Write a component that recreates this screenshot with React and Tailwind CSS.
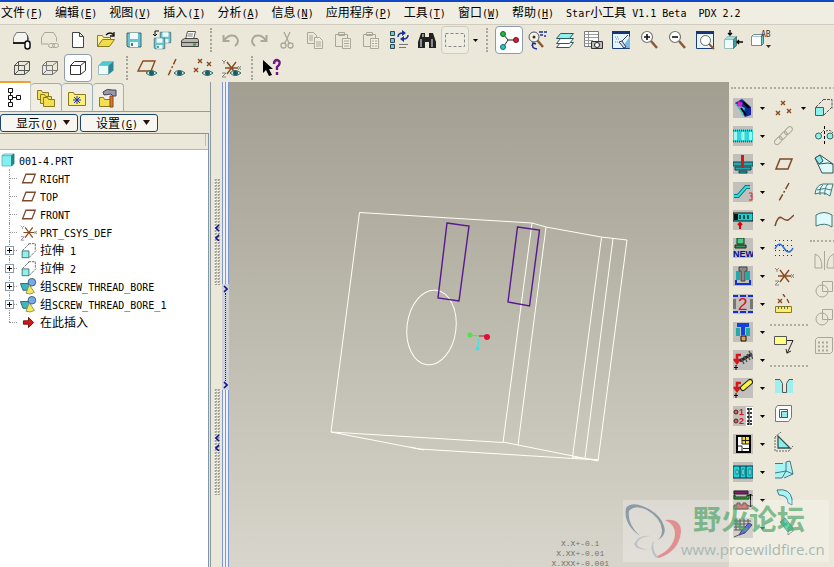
import React from 'react';

const MONO = "font-['DejaVu_Sans_Mono','Noto_Sans_CJK_SC',monospace]";

// Full-width runs are set at 12px and half-width runs at 10px, so two Latin cells equal one Chinese cell.
function T({ children, k }) {
  const runs = String(children).match(/[\u3000-\u9fff]+|[^\u3000-\u9fff]+/g) || [];
  return (
    <span className="whitespace-pre">
      {runs.map((r, i) => (
        <span key={i} className={/[\u3000-\u9fff]/.test(r) ? "font-['Noto_Sans_CJK_SC',sans-serif] text-[12px]" : 'text-[10px]'}>{r}</span>
      ))}
      {k && <span className="text-[10px]">(<u>{k}</u>)</span>}
    </span>
  );
}

const Svg = ({ children, s = 20 }) => (
  <svg width={s} height={s} viewBox="0 0 20 20" fill="none" strokeWidth="1" aria-hidden="true">{children}</svg>
);

function Tool({ label, children, boxed }) {
  return (
    <button
      type="button"
      aria-label={label}
      className={`flex h-7 w-7 shrink-0 items-center justify-center ${boxed === 'on' ? 'rounded border border-[#8a9bb0] bg-white' : boxed === 'off' ? 'rounded border border-[#d0cdc0] bg-[#efede2]' : ''}`}
    >
      <Svg>{children}</Svg>
    </button>
  );
}

const Sep = () => (
  <span className="flex h-7 w-[13px] shrink-0 items-center justify-center">
    <span className="h-6 border-l-2 border-dotted border-[#a8a598]" />
  </span>
);
const Drop = ({ label, className = '' }) => (
  <button type="button" aria-label={label} className={`flex h-7 w-[10px] shrink-0 items-center justify-center ${className}`}>
    <svg width="5" height="3" viewBox="0 0 5 3" aria-hidden="true"><path d="M0 0h5L2.500 3z" fill="#000" /></svg>
  </button>
);

const Wire = ({ c = '#555', hidden }) => (
  <g stroke={c}><path d="M2.500 7.500h10v9h-10zM2.500 7.500l4-4h11l-5 4M17.500 3.500v9l-5 4" />{hidden && <path d="M6.500 3.500v9h11M6.500 12.500l-4 4" />}</g>
);
const Eye = () => (
  <g><path d="M9 15q5-5 11 0q-6 5-11 0z" fill="#cfe5e2" stroke="#365" /><circle cx="14.500" cy="15" r="2.500" fill="#176070" /></g>
);
const X = ({ x, y, c = '#8a4a20', r = 2 }) => <path d={`M${x - r} ${y - r}l${2 * r} ${2 * r}M${x + r} ${y - r}l${-2 * r} ${2 * r}`} stroke={c} strokeWidth="1.400" />;
const Plane = () => <path d="M6 5h12l-4 10H2z" stroke="#7c4a2c" strokeWidth="1.500" />;
const Csys = () => (
  <g><path d="M4 10h13M6 4l9 12M15 4L6 16" stroke="#8a4a20" strokeWidth="1.400" /><path d="M1 2l2 2 2-2M3 4v2M17 8l3 4M20 8l-3 4M1 15h4l-4 4h4" stroke="#888" /></g>
);
const Disk = ({ x = 0, y = 0, s = 1 }) => (
  <g transform={`translate(${x} ${y}) scale(${s})`}><path d="M3 3h14v14H4l-1-1z" fill="#63c5cf" stroke="#426a74" /><path d="M6 3h8v6H6z" fill="#eefafa" /><path d="M6 12h8v5H6z" fill="#f5f5f5" /><path d="M7 13h2v3H7z" fill="#387" /></g>
);
const Folder = ({ x = 0, y = 0 }) => <path transform={`translate(${x} ${y})`} d="M1.500 3.500h4l1 2h6v7h-11z" fill="#f4df52" stroke="#8a7a20" />;
const Lens = ({ x = 8, y = 7 }) => (
  <g><path d={`M${x + 4} ${y + 4}l6 7`} stroke="#8a5a38" strokeWidth="2.500" /><circle cx={x} cy={y} r="5.500" fill="#fff" stroke="#777" strokeWidth="1.200" /></g>
);
const Clip = ({ list }) => (
  <g stroke="#aaa797"><path d="M2.500 4.500h12v12h-12zM5.500 2.500h6v3h-6z" /><path d="M9.500 8.500h8v10h-8z" fill="#efede2" /><path d={list ? 'M11 11h2M14 11h2M11 13.500h2M14 13.500h2M11 16h2M14 16h2' : 'M11 11h5M11 13.500h5M11 16h5'} /></g>
);

const ROW1A = [
  ['连接', <g><path d="M1.500 13.500v-6l3-5h9l3 5v3" fill="#f5f5f0" stroke="#777" /><path d="M1 13h12" stroke="#222" strokeWidth="2" /><path d="M15.500 5v6" stroke="#b22" /><rect x="13" y="11" width="5" height="8" rx="2.500" fill="#fff" stroke="#111" strokeWidth="1.500" /></g>],
  ['断开', <g stroke="#aaa797"><path d="M1.500 13.500v-6l3-5h9l3 5v4M1 14h7" /><rect x="8.500" y="13.500" width="6" height="4" rx="2" /><rect x="12.500" y="13.500" width="6" height="4" rx="2" /></g>],
  ['新建', <path d="M4.500 2.500h7l4 4v11h-11zM11.500 2.500v4h4" fill="#fff" stroke="#444" />],
  ['打开', <g><path d="M1.500 16.500v-11h5l1 2h7v3" fill="#fff3a0" stroke="#8a7a20" /><path d="M1.500 16.500l5-7h12l-5 7z" fill="#f2dc4a" stroke="#8a7a20" /><path d="M10 5q4-4 8 0M18 2v4h-4" stroke="#111" strokeWidth="1.300" /></g>],
  ['保存', <Disk />],
  ['保存副本', <g><Disk x={6} y={0} s={0.75} /><Disk x={0} y={6} s={0.75} /><path d="M7 1H3v5M1 4l2 2 2-2" stroke="#111" /></g>],
  ['打印', <g><path d="M5.500 9.500l2-8h8l-2 8" fill="#fff" stroke="#555" /><path d="M8 4h5M7.500 6h5" stroke="#777" /><path d="M1.500 10.500l3-2h13l1 2v6h-17z" fill="#b9b7aa" stroke="#444" /><path d="M2 12.500h16" stroke="#444" /><path d="M13 14.500h3" stroke="#2a2" strokeWidth="2" /></g>],
];
const ROW1B = [
  ['撤消', <path d="M2.500 5v6h6M3 11q4-7 11-5q6 5 0 10" stroke="#aaa797" strokeWidth="2" />],
  ['重做', <path d="M17.500 5v6h-6M17 11q-4-7-11-5q-6 5 0 10" stroke="#aaa797" strokeWidth="2" />],
  ['剪切', <g stroke="#aaa797" strokeWidth="1.300"><path d="M7 2l5 11M13 2L8 13" /><circle cx="6.500" cy="15.500" r="2.500" /><circle cx="13.500" cy="15.500" r="2.500" /></g>],
  ['复制', <g stroke="#aaa797"><path d="M2.500 2.500h6l3 3v8h-9z" /><path d="M9.500 7.500h5l3 3v8h-8z" fill="#efede2" /><path d="M4 6h4M4 8h4M4 10h4M11 12h5M11 14h5M11 16h5" /></g>],
  ['粘贴', <Clip />],
  ['选择性粘贴', <Clip list />],
  ['再生', <g><path d="M1.500 1.500h4v4h-4zM1.500 8.500h4v4h-4zM1.500 14.500h4v4h-4z" fill="#62d0d0" stroke="#345" /><path d="M9 7q0-4 5-4M19 5q0 4-5 4" stroke="#1a2f9a" strokeWidth="1.500" /><path d="M13 0l4 3-4 3zM15 6l-4 3 4 3z" fill="#1a2f9a" /><path d="M10 14.500h9M10 17.500h7" stroke="#777" /></g>],
  ['查找', <g fill="#222"><path d="M4 3h4v4h4V3h4l3 9v6h-7v-6H8v6H1v-6z" /><path d="M4 9v8M15 9v8M6 4v3" stroke="#bbb" strokeWidth="1.400" /></g>],
];
const ROW1C = [
  ['定向模式', <g><path d="M10 10l6 7" stroke="#8a5a38" strokeWidth="2.500" /><circle cx="7" cy="7" r="5" fill="#f4f2ea" stroke="#555" /><circle cx="7" cy="7" r="1.500" fill="#333" /><path d="M12 2h4M17 2h3M13 5h3M17 6h2M6 14q-2 4 4 5M5 16l1-3 3 1" stroke="#1a2f9a" strokeWidth="1.500" /></g>],
  ['层', <g stroke="#2c5a5a"><path d="M1.500 17.500l4-5h13l-4 5z" fill="#fff" /><path d="M1.500 13.500l4-5h13l-4 5z" fill="#fff" /><path d="M1.500 8.500l4-5h13l-4 5z" fill="#8ff0ec" /></g>],
  ['视图管理器', <g><path d="M1.500 1.500h14v15h-14z" fill="#fff" stroke="#777" /><path d="M1 4.500h14M1 7.500h14M1 10.500h9M1 13.500h7M5.500 2v14" stroke="#999" /><path d="M8.500 11.500h11v7h-11z" fill="#bbb" stroke="#333" /><circle cx="14" cy="15" r="2.500" fill="#fff" stroke="#222" /></g>],
  ['重画', <g><path d="M1.500 1.500h17v17h-17z" fill="#e8f4fc" stroke="#1c3f78" /><path d="M1 1h18v3H1z" fill="#17357a" /><path d="M11 18L19 6v12z" fill="#7ab8ea" /><path d="M8 12l5 6 2-1-4-6zM11 11l6-6" fill="#dde" stroke="#345" /><path d="M4 7h4M5 9h4M4 12h3" stroke="#49c" strokeDasharray="1 1" /></g>],
  ['放大', <g><Lens /><path d="M5 7h6M8 4v6" stroke="#111" strokeWidth="1.600" /></g>],
  ['缩小', <g><Lens /><path d="M5 7h6" stroke="#111" strokeWidth="1.600" /></g>],
  ['重新调整', <g><path d="M1.500 1.500h17v17h-17z" fill="#e8f4fc" stroke="#1c3f78" /><path d="M1 1h18v3H1z" fill="#17357a" /><path d="M13 13l6 6" stroke="#8a5a38" strokeWidth="2" /><circle cx="10.500" cy="10.500" r="5" fill="#fff" stroke="#666" /></g>],
  ['重定向', <g><path d="M1.500 9.500h9v9h-9z" fill="#effafa" stroke="#9bb" /><path d="M1.500 9.500l3-3h9l-3 3z" fill="#9ee0e0" stroke="#9bb" /><path d="M13.500 6.500v9l-3 3v-9z" fill="#38a0a4" stroke="#577" /><path d="M7 0v5M5 3l2 2 2-2M20 12h-6M16 10l-2 2 2 2" stroke="#000" strokeWidth="1.300" /></g>],
  ['已命名视图', <g><path d="M.500 6.500h10v9h-10z" fill="#fff" stroke="#789" /><path d="M.500 6.500l2-2h10l-2 2" fill="#dff" stroke="#789" /><path d="M12.500 4.500v9l-2 2v-9z" stroke="#577" fill="#6cc" /><path d="M15 15h5l-2.500 3z" fill="#422" /><text x="10" y="7" fontSize="8" fill="#333" className="font-['DejaVu_Sans_Mono',monospace]">AB</text></g>],
];
const ROW2A = [
  ['线框', <Wire hidden />],
  ['隐藏线', <Wire c="#777" hidden />],
  ['无隐藏线', <Wire c="#333" />, 'on'],
  ['着色', <g><path d="M2.500 7.500h10v9h-10z" fill="#effcfc" stroke="#9bb" /><path d="M2.500 7.500l4-4h11l-5 4z" fill="#4cc8d0" stroke="#9bb" /><path d="M17.500 3.500v9l-5 4v-9z" fill="#2a8894" /></g>],
];
const ROW2B = [
  ['基准平面显示', <g><path d="M6 3h12l-4 10H1z" stroke="#8a4a20" strokeWidth="1.400" /><Eye /></g>],
  ['基准轴显示', <g><path d="M11 1L3 18" stroke="#8a4a20" strokeWidth="1.500" strokeDasharray="6 2 2 2" /><Eye /></g>],
  ['基准点显示', <g><X x={7} y={3} /><X x={16} y={6} /><X x={3} y={12} /><Eye /></g>],
  ['坐标系显示', <g><Csys /><Eye /></g>],
];

const COL_A = [
  <g><path d="M2 5l7-4 9 8v8l-6 2z" fill="#1425a0" /><path d="M2 5l8 13 2-8z" fill="#40c8c8" /><path d="M5 3l5 2-2 4-4-1z" fill="#e020d0" /><path d="M10 4l6 6M8 10l5 7" stroke="#000" strokeWidth="2" /></g>,
  <g><path d="M0 4h20v12H0z" fill="#33d5d5" /><path d="M2.500 6v8M10 6v8M17.500 6v8" stroke="#9ff5f5" strokeWidth="3" /><path d="M0 4.500h20M0 15.500h20" stroke="#087878" strokeWidth="2" strokeDasharray="1 1" /></g>,
  <g><path d="M0 8h20v4H0zM2 13h16v3H2zM6 17h8v2H6z" fill="#2aa" stroke="#145" /><path d="M8 1h3v13H8z" fill="#d81818" /></g>,
  <g><path d="M1 14h4l8-9h4" stroke="#087878" strokeWidth="4" /><path d="M1 14h4l8-9h4" stroke="#35dede" strokeWidth="2" /><path d="M16 11h3v7h-3M17 14h2" stroke="#d22" /></g>,
  <g><path d="M0 3h20v8H0z" fill="#2cc" stroke="#111" /><path d="M1 4h4v6H1z" fill="#111" /><path d="M7 5v4M11 5v4M15 5v4" stroke="#055" strokeWidth="2" /><path d="M7 19v-5M5 15l2-2 2 2" stroke="#d00" strokeWidth="2" /></g>,
  <g><path d="M4 0h7v6H4z" fill="#4c8" stroke="#131" /><path d="M2 7h11v3H2z" fill="#486" stroke="#131" /><text x="0" y="19" fontSize="9" fontWeight="700" fill="#001090" className="font-['Liberation_Sans',sans-serif]">NEW</text></g>,
  <g><path d="M3 5h4v9H3zM13 5h4v9h-4z" fill="#2aa" /><path d="M6 1h8v4h-2v10H8V5H6z" fill="#888" stroke="#444" /><path d="M3 14v4h14v-4" stroke="#1530d0" strokeWidth="2" /></g>,
  <g><path d="M0 5h3v10H0zM17 5h3v10h-3z" fill="#777" /><path d="M0 2h20M0 18h20" stroke="#1530d0" strokeWidth="2" strokeDasharray="5 2 6 2" /><text x="5" y="16" fontSize="17" fill="#d81020" className="font-['Liberation_Sans',sans-serif]">2</text></g>,
  <g><path d="M3 6h4v8H3zM13 6h4v8h-4z" fill="#2aa" /><path d="M4 1h12v4h-4v8H8V5H4z" fill="#1540e0" /><path d="M8 14h5v5H8z" fill="#e8a050" stroke="#111" /></g>,
  <g><path d="M8 5H4v8M1 9l3 4 3-4" stroke="#d81818" strokeWidth="2.500" /><path d="M7 11L19 4" stroke="#222" strokeWidth="3" /><path d="M8 8l3 6M11 6l3 6M14 4l3 6M16 1l4 8" stroke="#555" strokeWidth="1.500" /><path d="M1 17.500h4M3 15v5" stroke="#000" /></g>,
  <g><path d="M8 5H4v8M1 9l3 4 3-4" stroke="#d81818" strokeWidth="2.500" /><path d="M10 10l7-6" stroke="#222" strokeWidth="6" strokeLinecap="round" /><path d="M10 10l7-6" stroke="#fff23a" strokeWidth="4" strokeLinecap="round" /><path d="M1 17.500h4M3 15v5" stroke="#000" /></g>,
  <g><circle cx="3" cy="6" r="2" stroke="#522" fill="#c66" /><circle cx="3" cy="15" r="2" stroke="#522" fill="#c66" /><text x="6" y="9" fontSize="9" fontWeight="700" fill="#d81020" className="font-['Liberation_Sans',sans-serif]">1</text><text x="6" y="18" fontSize="9" fontWeight="700" fill="#d81020" className="font-['Liberation_Sans',sans-serif]">2</text><path d="M13 1h7v19h-7z" fill="#fff" /><path d="M14 3h5M14 7h5M14 11h5M14 15h5M14 18h5" stroke="#000" strokeWidth="1.500" strokeDasharray="2 1" /><path d="M16 2v17" stroke="#000" /></g>,
  <g><path d="M4 2h13v16H4z" fill="#fff" stroke="#000" strokeWidth="2" /><path d="M9 3h7v7H9z" fill="#f8e020" /><path d="M9 3v7h7M12.500 3v7M9 6.500h7M10 14.500h6M5 12h4v5" stroke="#222" /></g>,
  <g><path d="M0 4h20v12H0z" fill="#24cfd2" stroke="#035" /><path d="M7 4v12M13 4v12" stroke="#035" /><path d="M3 8h2v4H3zM9 7h2v6H9zM16 7h2v6h-2z" fill="#dff" stroke="#088" /></g>,
  <g><path d="M1 1h14v3H1z" fill="#8a1c70" stroke="#222" /><path d="M2 7h12v-2h2v4H1V5h1z" fill="#3c3" stroke="#131" /><path d="M1 19v-4h3v-2h3v2h3v-2h3v2h2v4z" fill="#b85a48" stroke="#422" /><path d="M17.500 4v13M15.500 6l2-2 2 2M15.500 15l2 2 2-2" stroke="#000" /></g>,
  <g><path d="M1 3h17M1 6h17M1 9h14M1 12h9M3 1v11M7 1v11M11 1v11M15 1v8" stroke="#222" /><path d="M1 19l7-3" stroke="#222" /><path d="M6 17l3-5 7-7 3 2-7 8z" fill="#2a38d0" stroke="#114" /></g>,
];
const A_LABELS = ['装配', '板件', '螺钉', '弯管', '冲孔', '新件', '导柱', '双件', '定位', '螺纹', '销钉', '排序', '清单', '工位', '模座', '明细'];

const COL_B = [
  ['基准点', <g><X x={9} y={5} /><X x={4} y={15} /><X x={15} y={13} /></g>],
  ['链', <g stroke="#aaa797"><rect x="-4" y="-2.500" width="9" height="5" rx="2.500" transform="translate(4 15) rotate(-45)" /><rect x="-4" y="-2.500" width="9" height="5" rx="2.500" transform="translate(9 10) rotate(-45)" /><rect x="-4" y="-2.500" width="9" height="5" rx="2.500" transform="translate(14 5) rotate(-45)" /></g>],
  ['基准平面', <Plane />],
  ['基准轴', <path d="M15 1L5 19" stroke="#7c4a2c" strokeWidth="1.500" strokeDasharray="7 2 2 2" />],
  ['基准曲线', <path d="M1 16Q4 5 8 8T14 10T20 5" stroke="#7c4a2c" strokeWidth="1.500" />],
  ['草绘', <g><path d="M1 2.500h19M1 7.500h19M1 12.500h19M1 17.500h19" stroke="#333" strokeDasharray="1 3" /><path d="M1 11q4-9 9-1t9 0" stroke="#2a6fd8" strokeWidth="1.500" /></g>],
  ['坐标系', <Csys />],
  ['分析', <g><X x={6} y={7} /><path d="M9 0l2 3M13 5l2 4" stroke="#8a4a20" strokeWidth="1.400" /><path d="M1.500 12.500h16v6h-16z" fill="#f5ee70" stroke="#8a7a20" /><path d="M4.500 12v3M7.500 12v3M10.500 12v3M13.500 12v3" stroke="#665" /></g>],
  null,
  ['注释', <g><path d="M.500 1.500h12v8h-12z" fill="#ffff80" stroke="#555" /><path d="M13 5.500h6l-6 13M12 14l1 4 4-2" stroke="#222" /></g>],
  null,
  ['孔', <g><path d="M1 4h5l3 3v9h3V7l3-3h4v13H1z" fill="#a0efef" /><path d="M1 3.500h5l2.500 4v9h4v-9l2.500-4h4" stroke="#555" /></g>],
  ['壳', <g><path d="M1.500 4.500l2-3h14v12l-3 4h-13z" fill="#fff" stroke="#777" /><path d="M5.500 5.500h8v8h-8z" fill="#fff" stroke="#366" /><path d="M7.500 7.500h6v6h-6z" fill="#8eecec" stroke="#366" /></g>],
  ['筋', <g><path d="M4 4v12h12z" fill="#8eecec" stroke="#355" strokeWidth="1.300" /><path d="M1 5l6-5M1 5v14h14l4-5" stroke="#666" strokeDasharray="2 1" /></g>],
  ['拔模', <g><path d="M1 3h9l4-2 5 13-8 4H1z" fill="#a8f4f2" /><path d="M1 3.500h8M12 2v9l-4 7H1M12 11l-11 2M12 2l4-1 3 13-9 4M12 11l7 3" stroke="#478" /></g>],
  ['倒圆角', <path d="M3 2q13-2 15 9v6l-4-2q0-8-9-8z" fill="#a8f4f2" stroke="#478" />],
  ['倒角', <g><path d="M6 6l5-4 8 10-5 4z" fill="#2cd0a0" stroke="#478" /><path d="M14 16v3l5-4v-3" stroke="#777" /></g>],
];
const COL_C = [
  ['拉伸', <g><path d="M1.500 9.500h8v8h-8z" fill="#8ff0ec" stroke="#366" /><path d="M9 1.500h9v9M2 9l8-8M10 17l8-8" stroke="#555" strokeDasharray="3 1" /></g>],
  ['旋转', <g><path d="M10.500 0v20" stroke="#000" strokeDasharray="3 2" /><circle cx="4.500" cy="10" r="3" fill="#8ff0ec" stroke="#366" /><path d="M7 7l3-3M12 5q4-2 7 2" stroke="#555" strokeDasharray="2 1" /><circle cx="16" cy="10" r="3" fill="#8ff0ec" stroke="#366" /></g>],
  ['扫描混合', <g><path d="M1 4l5-3 13 9v9H8z" fill="#dffafa" stroke="#355" /><path d="M1 4l5-3 3 6-4 3z" fill="#8eecec" stroke="#355" /><path d="M5 10l9-1 5 1" stroke="#355" /></g>],
  ['边界混合', <g><path d="M1 12q1-9 8-10h10l-3 12q-6-5-15-2z" fill="#dffafa" stroke="#477" /><path d="M9 3q-4 3-3 10M14 2q-4 4-3 11M3 8q8-3 14 0" stroke="#477" /></g>],
  ['造型', <path d="M2 5q8-5 16 0v12q-7-5-16-1z" fill="#dffafa" stroke="#477" />],
  null,
  ['镜像', <path d="M10.500 0v19M1 3q7 2 7 14H1zM20 3q-7 2-7 14h7z" stroke="#aaa797" />],
  ['合并', <g stroke="#aaa797"><path d="M8.500 2.500h10v10h-10z" /><circle cx="8" cy="12" r="6" /></g>],
  ['修剪', <g stroke="#aaa797"><path d="M8.500 2.500h10v10h-10z" /><circle cx="8" cy="12" r="6" /></g>],
  ['阵列', <g stroke="#aaa797"><path d="M1.500 4.500l2-2h15v14l-2 2h-15z" /><path d="M4 7.500h12M4 11.500h12M4 15.500h12" strokeWidth="2" strokeDasharray="2 2" /></g>],
];

const HSep = ({ tall }) => (
  <span className={`flex w-full items-center ${tall ? 'h-3' : 'h-[13px]'}`}><span className="w-full border-t-2 border-dotted border-[#b0ad9f]" /></span>
);

const PlaneIcon = <path d="M7 5h11l-4 10H3z" fill="#fff" stroke="#7c4a2c" strokeWidth="1.500" />;
const ExtrudeIcon = <g><path d="M2.500 10.500h8v8h-8z" fill="#8ff0ec" stroke="#366" /><path d="M10 2h8v8M3 10l8-8M11 18l8-8" stroke="#555" strokeDasharray="3 1" /></g>;
const GroupIcon = <g><path d="M.500 6.500h10l2 3-3 5h-6z" fill="#3ab8c0" stroke="#356" /><circle cx="14" cy="5" r="4.500" fill="#7aa8e8" stroke="#356" /><path d="M7 18l4-10 6 9q-5 3-10 1z" fill="#f4e860" stroke="#885" /></g>;
const TREE = [
  ['RIGHT', PlaneIcon], ['TOP', PlaneIcon], ['FRONT', PlaneIcon], ['PRT_CSYS_DEF', <Csys />],
  ['拉伸 1', ExtrudeIcon, 1], ['拉伸 2', ExtrudeIcon, 1],
  ['组SCREW_THREAD_BORE', GroupIcon, 1], ['组SCREW_THREAD_BORE_1', GroupIcon, 1],
  ['在此插入', <path d="M4 8h6V4l6 6-6 6v-4H4z" fill="#d81818" stroke="#600" />],
];
const TABS = [
  ['模型树', <path d="M3.500 1.500h4v4h-4zM3.500 8.500h4v4h-4zM3.500 15.500h4v4h-4zM11.500 8.500h4v4h-4zM5.500 6v2M5.500 13v2M8 10.500h3" stroke="#111" />],
  ['文件夹', <g><Folder x={0} y={-1} /><Folder x={3} y={3} /><Folder x={6} y={6} /></g>],
  ['收藏夹', <g><path d="M1.500 4.500h5l1 2h11v11h-17z" fill="#fbf07a" stroke="#8a7a20" /><path d="M10 8v8M7 9l6 6M13 9l-6 6M6 12h8" stroke="#1a2fb0" /></g>],
  ['连接', <g><Folder x={0} y={6} /><path d="M5 4q4-4 9-2h4v6h-3l-2-2-7 1z" fill="#99a" stroke="#445" /><path d="M12 8h3v11h-3z" fill="#e07828" stroke="#842" /></g>],
];

const MENUS = [['文件', 'F'], ['编辑', 'E'], ['视图', 'V'], ['插入', 'I'], ['分析', 'A'], ['信息', 'N'], ['应用程序', 'P'], ['工具', 'T'], ['窗口', 'W'], ['帮助', 'H'], ['Star小工具 V1.1 Beta'], ['PDX 2.2']];

const tools = (list) => list.map(([l, g, b]) => <Tool key={l} label={l} boxed={b}>{g}</Tool>);

function ModelTree() {
  return (
    <aside className="flex w-[211px] shrink-0 flex-col border-r border-[#8a9a9a]">
      <div className="flex h-[30px] items-end border-b border-[#9a9a90]" role="tablist">
        {TABS.map(([l, g], i) => (
          <button key={l} type="button" role="tab" aria-label={l} aria-selected={i === 0} className={`flex w-[31px] items-center justify-center border-r ${i === 0 ? 'h-[30px] border-t-2 border-r-[#c5c8c0] border-t-[#f0a030] bg-white' : 'h-[28px] rounded-t border-t border-[#9ab0b8] bg-[#f0eee2]'}`}>
            <Svg>{g}</Svg>
          </button>
        ))}
      </div>
      <div className="flex h-[21px] items-center gap-[2px]">
        {[['显示', 'O'], ['设置', 'G']].map(([l, k]) => (
          <button key={l} type="button" className="flex h-[18px] w-[78px] items-center justify-end gap-[5px] rounded-[3px] border border-[#1c4468] bg-[#f7f6f0] pr-[7px]">
            <T k={k}>{l}</T>
            <svg width="7" height="5" viewBox="0 0 7 5" aria-hidden="true"><path d="M0 0h7L3.500 5z" fill="#2a1008" /></svg>
          </button>
        ))}
      </div>
      <div className="mr-[1px] flex min-h-0 flex-1 flex-col border-t border-r border-[#7f96a8] bg-white">
        <div className="flex h-[16px] shrink-0 border-b border-[#b8b5a8] bg-[#ebe8da] pr-[2px]"><span className="h-3 w-full border-r border-[#c0bdae]" /></div>
        <ul className="pt-[1px]">
          <li className="flex h-[18px] items-center gap-[3px]"><Svg s={16}><path d="M2.500 4.500h12v13h-12z" fill="#80f0f0" stroke="#6ab" /><path d="M2.500 4.500l2-2h13l-3 2z" fill="#b0fafa" stroke="#6ab" /><path d="M17.500 2.500v12l-3 3v-13z" fill="#278890" stroke="#277" /></Svg><T>001-4.PRT</T></li>
          {TREE.map(([l, g, exp], i) => (
            <li key={l} className="flex h-[18px] items-center gap-[3px]">
              <span className="relative flex h-full w-[17px] shrink-0 items-center pl-[5px]">
                <span className={`absolute top-0 left-[9px] border-l border-dotted border-[#999] ${i === 8 ? 'h-1/2' : 'h-full'}`} />
                <span className="absolute right-0 left-[9px] border-t border-dotted border-[#999]" />
                {exp && <button type="button" aria-label={'展开 ' + l} className="relative flex h-[9px] w-[9px] items-center justify-center border border-[#8a98a8] bg-white"><svg width="5" height="5" viewBox="0 0 5 5" aria-hidden="true"><path d="M0 2.500h5M2.500 0v5" stroke="#000" /></svg></button>}
              </span>
              <span className="flex w-[17px] shrink-0 justify-center"><Svg s={17}>{g}</Svg></span>
              <T>{l}</T>
            </li>
          ))}
        </ul>
      </div>
    </aside>
  );
}

const Grip = () => (
  <div className="flex h-[106px] flex-col items-center justify-center bg-[#d6d3c8] bg-[conic-gradient(#a3a095_25%,transparent_25%_50%,#f5f3ea_50%_75%,transparent_75%)] bg-[length:3px_3px]">
    <svg width="5" height="17" viewBox="0 0 5 17" fill="none" aria-hidden="true"><path d="M4 1L1 4l3 3M4 11l-3 3 3 3" stroke="#0c1494" strokeWidth="1.600" /></svg>
  </div>
);
const Rails = () => <div className="flex-1 border-x border-[#7f96d0] bg-[#eef0f4] px-[2px]"><div className="h-full border-l border-[#7f96d0]" /></div>;

function Splitter() {
  return (
    <div className="flex w-[18px] shrink-0 pl-[3px]" role="separator" aria-orientation="vertical">
      <div className="flex w-[6px] flex-col gap-[104px] pt-[97px]"><Grip /><Grip /></div>
      <div className="ml-[2px] flex w-[7px] flex-col">
        <Rails />
        <div className="flex h-[106px] flex-col items-center justify-between bg-[#cfd2d6] py-[1px]">
          {[0, 1].map((n) => (
            <React.Fragment key={n}>
              {n === 1 && <span className="flex-1 border-l border-dotted border-[#0c1494]" />}
              <svg width="5" height="8" viewBox="0 0 5 8" fill="none" aria-hidden="true"><path d="M1 1l3 3-3 3" stroke="#0c1494" strokeWidth="1.600" /></svg>
            </React.Fragment>
          ))}
        </div>
        <div className="flex h-[177px] flex-col"><Rails /></div>
      </div>
    </div>
  );
}

function Viewport() {
  return (
    <main className="relative min-w-0 flex-1 overflow-hidden bg-linear-to-b from-[#a29f91] to-[#d8d5cc]">
      <svg className="h-full w-full" viewBox="229 82 500 485" fill="none" aria-label="001-4.PRT">
        <g stroke="#fffff8" strokeWidth="1">
          <path d="M359.500 212.500L331 432l172 10.500L532 223z" />
          <path d="M532 223l14 4-28 218-15-3M546 227l55 10 26 3-29 221-80-16" />
          <path d="M601.500 237.500L572.500 457M613 238.500L585 458M331 432l88 17 179 11M410 447l14 3M572 457l26 3" />
          <ellipse cx="431.500" cy="327.500" rx="24.500" ry="37.500" transform="rotate(7 431.500 327.500)" />
        </g>
        <path d="M447 223l22 3-10 75-21-3zM517.500 227l22 3-10 76-21.500-4z" stroke="#581890" strokeWidth="1.400" />
        <path d="M470 335l9 1" stroke="#5fe050" /><path d="M479 336h8" stroke="#b01838" /><path d="M479 337l-1 11" stroke="#48e0e0" />
        <circle cx="470" cy="335" r="2.500" fill="#52e048" /><circle cx="487" cy="337" r="3" fill="#e01038" /><circle cx="477.500" cy="348.500" r="2" fill="#40e0e8" />
      </svg>
      <div className="absolute right-[120px] -bottom-[2px] text-center font-['Liberation_Mono',monospace] text-[8px] leading-[10px] text-[#77746a]">
        <p>X.X+-0.1</p><p>X.XX+-0.01</p><p>X.XXX+-0.001</p>
      </div>
    </main>
  );
}

function Toolbox() {
  const col = (list) => list.map((it, i) => (it ? <Tool key={it[0]} label={it[0]}>{it[1]}</Tool> : <HSep key={i} />));
  return (
    <aside className="flex w-[105px] shrink-0 overflow-hidden bg-[#ebe8da]">
      <div className="flex w-[38px] shrink-0 flex-col pl-[2px]">
        <HSep tall />
        {COL_A.map((g, i) => (
          <div key={i} className="flex">
            <button type="button" aria-label={A_LABELS[i]} className="flex h-7 w-[26px] items-center pl-[2px]"><span className="bg-[#c2c0bc]"><Svg>{g}</Svg></span></button>
            <Drop label={A_LABELS[i] + '选项'} />
          </div>
        ))}
      </div>
      <div className="ml-[3px] flex w-[38px] shrink-0 flex-col">
        <HSep tall />
        <div className="flex"><Tool label="基准点">{COL_B[0][1]}</Tool><Drop label="基准点选项" /></div>
        {col(COL_B.slice(1))}
      </div>
      <div className="ml-[2px] flex w-7 shrink-0 flex-col"><HSep tall />{col(COL_C)}</div>
    </aside>
  );
}

export default function App() {
  return (
    <div className={`relative flex h-screen flex-col overflow-hidden bg-[#ebe8da] text-black ${MONO}`}>
      <nav className="flex h-[25px] shrink-0 items-center gap-3 border-t-2 border-b border-t-[#1048c8] border-b-[#d0cdc0] bg-[#f0eee2] pl-[1px] leading-4">
        {MENUS.map(([l, k]) => <button key={l} type="button" className="shrink-0"><T k={k}>{l}</T></button>)}
      </nav>
      <div className="flex h-[57px] shrink-0 flex-col pt-[1px]">
        <div className="flex pl-2">
          {tools(ROW1A)}<Sep />{tools(ROW1B)}
          <Tool label="选取" boxed="off"><path d="M.500 3.500h19v13h-19z" stroke="#888" strokeDasharray="3 2" /></Tool>
          <Drop label="选取选项" className="ml-[1px]" /><Sep />
          <div className="ml-[2px] flex">
            <Tool label="旋转中心" boxed="on"><path d="M5 5l4 5-4 6M9 10h7" stroke="#222" /><circle cx="4" cy="4" r="2.500" fill="#2ab83a" stroke="#163" /><circle cx="17" cy="10" r="2.500" fill="#e01838" stroke="#611" /><circle cx="4" cy="17" r="2.500" fill="#2cc8c8" stroke="#166" /></Tool>
            {tools(ROW1C)}
          </div>
        </div>
        <div className="flex pl-2">
          {tools(ROW2A)}<Sep />{tools(ROW2B)}<Sep />
          <Tool label="上下文帮助"><path d="M1 2v13l3-3 3 6 3-1-3-6h4z" fill="#000" /><path d="M12 6q0-4 3-4 4 1 2 5l-2 2v3M15 14v3" stroke="#701880" strokeWidth="2.400" /></Tool>
        </div>
      </div>
      <div className="flex min-h-0 flex-1">
        <ModelTree /><Splitter /><Viewport /><Toolbox />
      </div>
      <div className="pointer-events-none absolute right-[5px] bottom-[5px] flex h-[62px] w-[206px] bg-white/25">
        <svg width="58" height="62" viewBox="0 0 58 62" fill="none" className="shrink-0" aria-hidden="true">
          <path d="M26 9Q9 0 3 8q-3 16 14 28Q4 24 6 11q6-7 18-1q14 8 15 20q0 6-4 10q9-5 6-14Q38 16 26 9z" fill="#8d9ba6" />
          <path d="M42 20q16-2 16 12-2 19-22 26l-4-1q18-7 20-22 1-10-10-15z" fill="#e09090" />
          <path d="M29 36q-14-2-18 8 2 7 15 5-12 0-12-6 3-7 15-7zM36 58q-8-8-5-18-6 8 1 17z" fill="#bfc3c5" />
        </svg>
        <div className="flex flex-col whitespace-nowrap">
          <span className="pl-3 font-['Noto_Sans_CJK_SC',sans-serif] text-[28px] leading-[36px] font-bold text-[#4fa568]/70">野火论坛</span>
          <span className="font-['Open_Sans',sans-serif] text-[15px] leading-[26px] text-[#a9b8b4]">www.proewildfire.cn</span>
        </div>
      </div>
    </div>
  );
}
